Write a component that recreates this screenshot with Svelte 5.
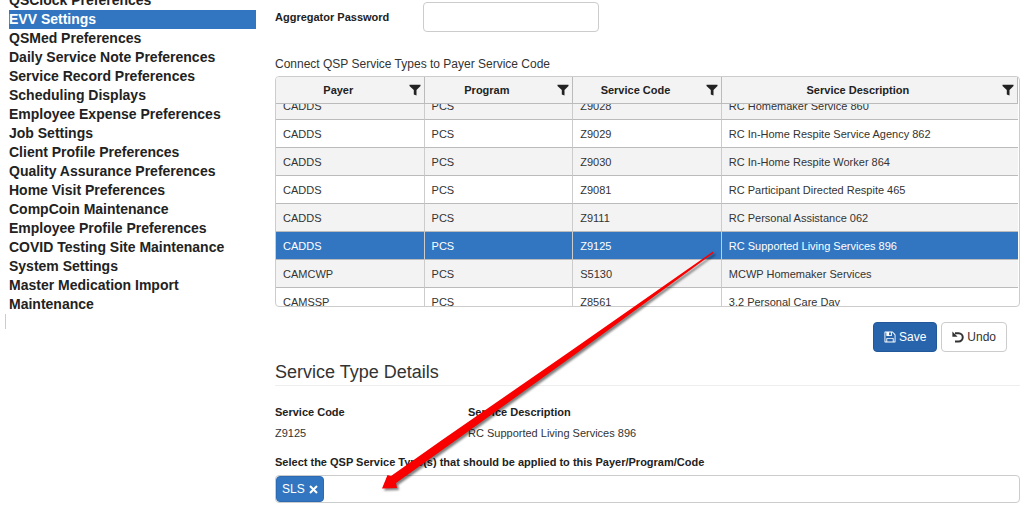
<script>
  import { onMount } from 'svelte';

  const menu = [
    'QSClock Preferences',
    'EVV Settings',
    'QSMed Preferences',
    'Daily Service Note Preferences',
    'Service Record Preferences',
    'Scheduling Displays',
    'Employee Expense Preferences',
    'Job Settings',
    'Client Profile Preferences',
    'Quality Assurance Preferences',
    'Home Visit Preferences',
    'CompCoin Maintenance',
    'Employee Profile Preferences',
    'COVID Testing Site Maintenance',
    'System Settings',
    'Master Medication Import Maintenance'
  ];
  const columns = ['Payer', 'Program', 'Service Code', 'Service Description'];
  const rows = [
    ['CADDS', 'PCS', 'Z9028', 'RC Homemaker Service 860'],
    ['CADDS', 'PCS', 'Z9029', 'RC In-Home Respite Service Agency 862'],
    ['CADDS', 'PCS', 'Z9030', 'RC In-Home Respite Worker 864'],
    ['CADDS', 'PCS', 'Z9081', 'RC Participant Directed Respite 465'],
    ['CADDS', 'PCS', 'Z9111', 'RC Personal Assistance 062'],
    ['CADDS', 'PCS', 'Z9125', 'RC Supported Living Services 896'],
    ['CAMCWP', 'PCS', 'S5130', 'MCWP Homemaker Services'],
    ['CAMSSP', 'PCS', 'Z8561', '3.2 Personal Care Day']
  ];
  let selected = $state(5);
  let grid;

  onMount(() => {
    grid.scrollTop = 12;
  });
</script>

<div class="page">
  <nav class="sidebar">
    <ul>
      {#each menu as item}
        <li><a href="#settings" class:active={item === 'EVV Settings'}>{item}</a></li>
      {/each}
    </ul>
    <div class="edge"></div>
  </nav>

  <main>
    <div class="field">
      <label for="password">Aggregator Password</label>
      <input id="password" type="password" />
    </div>

    <p class="caption" id="grid-caption">Connect QSP Service Types to Payer Service Code</p>
    <div class="grid" bind:this={grid}>
      <table aria-labelledby="grid-caption">
        <thead>
          <tr>
            {#each columns as column}
              <th scope="col">
                <div class="head">
                  <span>{column}</span>
                  <svg width="12" height="12" viewBox="0 0 12 12" aria-hidden="true">
                    <path d="M.5.800h11v1.100L7.500 6v5.500L4.800 10.500V6L.5 1.900z" fill="#222" />
                  </svg>
                </div>
              </th>
            {/each}
          </tr>
        </thead>
        <tbody>
          {#each rows as row, i}
            <tr class:selected={i === selected} onclick={() => (selected = i)}>
              {#each row as cell}<td>{cell}</td>{/each}
            </tr>
          {/each}
        </tbody>
      </table>
    </div>

    <div class="actions">
      <button class="save" type="button">
        <svg width="12" height="12" viewBox="64 64 1664 1664" aria-hidden="true">
          <path fill="currentColor" d="M512 1536h768v-384h-768v384zm896 0h128v-896q0-14-10-38.500t-20-34.500l-281-281q-10-10-34-20t-39-10v416q0 40-28 68t-68 28h-576q-40 0-68-28t-28-68v-416h-128v1280h128v-416q0-40 28-68t68-28h832q40 0 68 28t28 68v416zm-384-928v-320q0-13-9.500-22.500t-22.500-9.500h-192q-13 0-22.500 9.500t-9.500 22.500v320q0 13 9.500 22.500t22.500 9.500h192q13 0 22.500-9.500t9.500-22.500zm640 32v928q0 40-28 68t-68 28h-1344q-40 0-68-28t-28-68v-1344q0-40 28-68t68-28h928q40 0 88 20t76 48l280 280q28 28 48 76t20 88z" />
        </svg>
        Save
      </button>
      <button type="button">
        <svg width="12" height="12" viewBox="0 0 12 12" aria-hidden="true">
          <path d="M3 2.200h3.600a4 4 0 0 1 0 8.300H3" fill="none" stroke="currentColor" stroke-width="2" />
          <path d="M.4.5 5.600 5.700H.4z" fill="currentColor" />
        </svg>
        Undo
      </button>
    </div>

    <h2>Service Type Details</h2>
    <dl>
      <div>
        <dt>Service Code</dt>
        <dd>{rows[selected][2]}</dd>
      </div>
      <div>
        <dt>Service Description</dt>
        <dd>{rows[selected][3]}</dd>
      </div>
    </dl>

    <label class="types-label" for="types">Select the QSP Service Type(s) that should be applied to this Payer/Program/Code</label>
    <div class="types">
      <button class="tag" type="button">
        SLS
        <svg width="9" height="9" viewBox="0 0 9 9" aria-hidden="true">
          <path d="M1 1l7 7M8 1L1 8" stroke="currentColor" stroke-width="2" />
        </svg>
      </button>
      <input id="types" type="text" />
    </div>
  </main>

  <svg class="arrow" width="350" height="256" viewBox="375 244 350 256" aria-hidden="true">
    <path d="M382 488.500L387.500 475L391 476L442 440L567 353.500L713 251.500L713.500 253L577 353L459 438L396 483L397 488Z" />
  </svg>
</div>

<style>
  :global(body) {
    background: #fff;
  }
  .page {
    position: relative;
    display: flex;
    gap: 19px;
    padding-right: 10px;
    overflow: hidden;
    font-family: 'Liberation Sans', Arial, sans-serif;
    font-size: 11px;
    line-height: 16px;
    color: #333;
  }
  .sidebar {
    flex: none;
    width: 251px;
    margin: -9px 0 0 5px;
  }
  ul {
    list-style: none;
    margin: 0;
    padding: 0 0 0 4px;
  }
  .sidebar a {
    display: block;
    color: #222;
    font-size: 14px;
    font-weight: bold;
    line-height: 19px;
    text-decoration: none;
  }
  .sidebar a.active {
    background: #3276c1;
    color: #fff;
  }
  .edge {
    height: 15px;
    border-left: 1px solid #ccc;
  }
  main {
    flex: 1;
    min-width: 0;
    padding-top: 2px;
  }
  .field {
    display: flex;
    align-items: center;
  }
  .field label {
    width: 148px;
  }
  label,
  dt {
    color: #222;
    font-weight: bold;
  }
  .field input {
    box-sizing: border-box;
    width: 176px;
    height: 30px;
    border: 1px solid #ccc;
    border-radius: 4px;
  }
  .caption {
    margin: 24px 0 4px;
    font-size: 12px;
  }
  .grid {
    box-sizing: border-box;
    height: 231px;
    padding-right: 1px;
    overflow: hidden;
    border: 1px solid #ccc;
    border-radius: 4px;
  }
  table {
    width: 100%;
    table-layout: fixed;
    border-collapse: separate;
    border-spacing: 0;
  }
  th {
    position: sticky;
    top: 0;
    width: 20%;
    height: 26px;
    padding: 0;
    background: #f3f3f3;
    border-right: 1px solid #bbb;
    border-bottom: 1px solid #bbb;
    color: #222;
  }
  th:last-child {
    width: 40%;
  }
  .head {
    display: flex;
    align-items: center;
    gap: 8px;
    padding-right: 3px;
  }
  .head span {
    flex: 1;
  }
  td {
    box-sizing: border-box;
    height: 28px;
    padding: 0 7px;
    border-right: 1px solid #ccc;
    border-bottom: 1px solid #bbb;
  }
  td:last-child {
    border-right: 0;
  }
  tbody tr:nth-child(odd) {
    background: #f3f3f3;
  }
  tbody tr.selected {
    background: #3276c1;
    color: #fff;
  }
  .actions {
    display: flex;
    justify-content: flex-end;
    gap: 4px;
    padding: 15px 13px 0 0;
  }
  button {
    display: flex;
    align-items: center;
    font-family: inherit;
    color: #333;
    cursor: pointer;
  }
  .actions button {
    gap: 3px;
    height: 30px;
    padding: 0 10px;
    background: #fff;
    border: 1px solid #ccc;
    border-radius: 4px;
    font-size: 12px;
  }
  .actions .save {
    background: #2764ac;
    border-color: #22589a;
    color: #fff;
  }
  h2 {
    margin: 9px 0 18px;
    padding-bottom: 1px;
    border-bottom: 1px solid #eee;
    font-size: 18px;
    font-weight: normal;
    line-height: 23px;
  }
  dl {
    display: flex;
    margin: 0;
  }
  dl div:first-child {
    width: 193px;
  }
  dd {
    margin: 5px 0 0;
  }
  .types-label {
    display: block;
    margin: 13px 0 5px;
  }
  .types {
    display: flex;
    box-sizing: border-box;
    height: 28px;
    border: 1px solid #ccc;
    border-radius: 4px;
  }
  .types input {
    flex: 1;
    border: 0;
    outline: 0;
    background: none;
  }
  .tag {
    gap: 4px;
    padding: 0 5px;
    background: #3276c1;
    border: 1px solid #2c6bb2;
    border-radius: 4px;
    color: #fff;
    font-size: 12px;
  }
  .arrow {
    position: absolute;
    left: 375px;
    top: 244px;
    pointer-events: none;
    fill: #f80000;
    filter: drop-shadow(2px 2px 1px rgb(0 0 0 / 50%));
  }
</style>
